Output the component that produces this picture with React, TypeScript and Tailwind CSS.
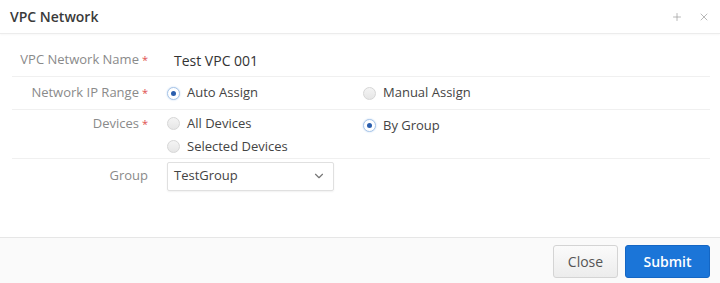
import React, { useState } from "react";
import { ChevronDown, Plus, X } from "lucide-react";

function Radio({ checked, label, onClick }: { checked: boolean; label: string; onClick?: () => void }) {
  return (
    <button type="button" onClick={onClick} className="flex items-center gap-[7px] h-[23px] text-[13px] text-[#444]">
      {checked ? (
        <span className="w-[13px] h-[13px] rounded-full border border-[#a9c6e8] bg-white flex items-center justify-center shadow-[0_0_2px_#bcd4ef]">
          <span className="w-[5px] h-[5px] rounded-full bg-[#2b5fae]" />
        </span>
      ) : (
        <span className="w-[13px] h-[13px] rounded-full border border-[#d6d6d6] bg-gradient-to-b from-[#f4f4f4] to-[#e6e6e6]" />
      )}
      <span>{label}</span>
    </button>
  );
}

function Label({ text, required }: { text: string; required?: boolean }) {
  return (
    <div className="w-[136px] shrink-0 text-right text-[13px] text-[#8a8a8a]">
      {text}
      {required && <span className="text-[#e05050] ml-[3px] text-[11px]">*</span>}
    </div>
  );
}

export default function App() {
  const [ipRange, setIpRange] = useState("auto");
  const [devices, setDevices] = useState("group");

  return (
    <div className="w-[720px] h-[283px] bg-white flex flex-col font-['Open_Sans',sans-serif]">
      <div className="h-[34px] shrink-0 flex items-center justify-between pl-[10px] pr-[10px] border-b border-[#ececec] shadow-[0_1px_2px_rgba(0,0,0,0.03)]">
        <h2 className="text-[14px] font-semibold text-[#3a3a3a]">VPC Network</h2>
        <div className="flex items-center gap-[15px] text-[#a0a0a0]">
          <Plus className="w-[12px] h-[12px]" strokeWidth={1.5} />
          <X className="w-[12px] h-[12px]" strokeWidth={1.5} />
        </div>
      </div>

      <div className="flex-1 pt-[10px] pl-[12px] pr-[10px]">
        <div className="h-[33px] flex items-center border-b border-[#f0f0f0]">
          <Label text="VPC Network Name" required />
          <div className="pl-[26px] text-[14px] text-[#333]">Test VPC 001</div>
        </div>

        <div className="h-[33px] flex items-center border-b border-[#f0f0f0]">
          <Label text="Network IP Range" required />
          <div className="pl-[19px] flex">
            <div className="w-[196px]">
              <Radio checked={ipRange === "auto"} label="Auto Assign" onClick={() => setIpRange("auto")} />
            </div>
            <Radio checked={ipRange === "manual"} label="Manual Assign" onClick={() => setIpRange("manual")} />
          </div>
        </div>

        <div className="h-[49px] flex items-start pt-[2px] border-b border-[#f0f0f0]">
          <div className="h-[23px] flex items-center">
            <Label text="Devices" required />
          </div>
          <div className="pl-[19px] flex">
            <div className="w-[196px] flex flex-col">
              <Radio checked={devices === "all"} label="All Devices" onClick={() => setDevices("all")} />
              <Radio checked={devices === "selected"} label="Selected Devices" onClick={() => setDevices("selected")} />
            </div>
            <div className="pt-[2px]">
              <Radio checked={devices === "group"} label="By Group" onClick={() => setDevices("group")} />
            </div>
          </div>
        </div>

        <div className="h-[34px] flex items-center">
          <div className="w-[136px] shrink-0 text-right text-[13px] text-[#8a8a8a] pr-[0px]">Group</div>
          <div className="ml-[19px] w-[167px] h-[29px] border border-[#e0e0e0] rounded-[2px] shadow-[0_1px_2px_rgba(0,0,0,0.06)] flex items-center justify-between pl-[6px] pr-[7px] text-[13px] text-[#444]">
            <span>TestGroup</span>
            <ChevronDown className="w-[14px] h-[14px] text-[#777]" strokeWidth={2} />
          </div>
        </div>
      </div>

      <div className="h-[46px] shrink-0 border-t border-[#e6e6e6] bg-[#fafafa] flex items-start justify-end gap-[7px] pt-[7px] pr-[10px]">
        <button className="w-[65px] h-[33px] rounded-[3px] border border-[#d4d4d4] bg-gradient-to-b from-[#fbfbfb] to-[#ececec] text-[14px] text-[#555]">
          Close
        </button>
        <button className="w-[85px] h-[33px] rounded-[3px] border border-[#1466c4] bg-[#1b75d8] text-[14px] font-semibold text-white">
          Submit
        </button>
      </div>
    </div>
  );
}
